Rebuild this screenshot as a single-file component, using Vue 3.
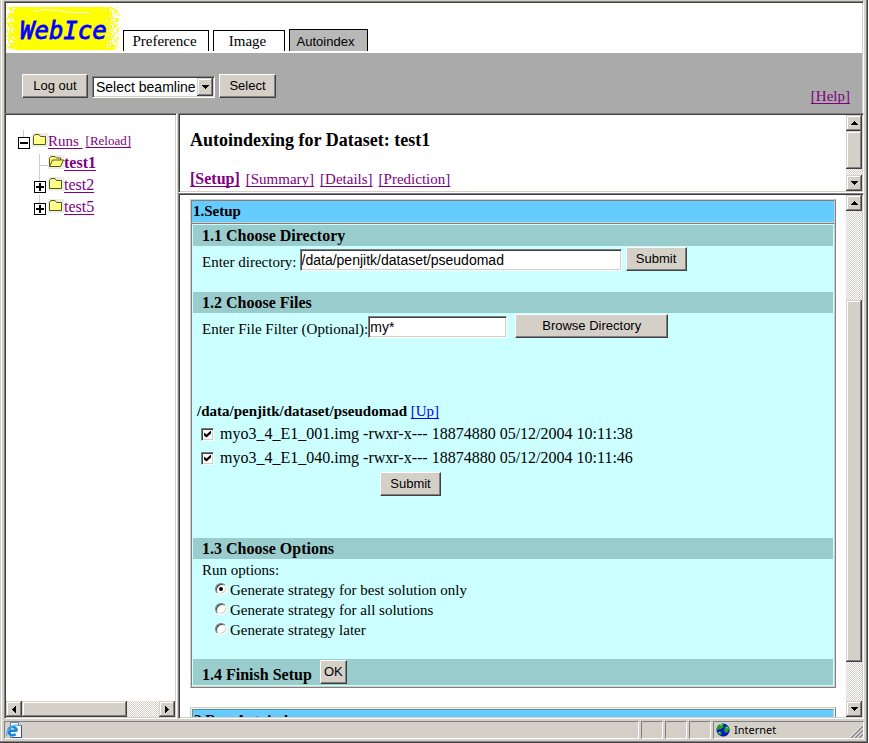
<script setup>
import { ref } from 'vue'

const beamline = ref('Select beamline')
const directory = ref('/data/penjitk/dataset/pseudomad')
const filter = ref('my*')
const strategy = ref('best')

const tabs = ['Preference', 'Image', 'Autoindex']
const activeTab = ref('Autoindex')

const sections = ['Setup', 'Summary', 'Details', 'Prediction']
const activeSection = ref('Setup')

const runs = [
  { name: 'test1', open: true },
  { name: 'test2', open: false },
  { name: 'test5', open: false },
]

const files = ref([
  { name: 'myo3_4_E1_001.img', mode: '-rwxr-x---', size: 18874880, date: '05/12/2004 10:11:38', checked: true },
  { name: 'myo3_4_E1_040.img', mode: '-rwxr-x---', size: 18874880, date: '05/12/2004 10:11:46', checked: true },
])

const strategies = [
  { value: 'best', label: 'Generate strategy for best solution only' },
  { value: 'all', label: 'Generate strategy for all solutions' },
  { value: 'later', label: 'Generate strategy later' },
]

// Scroll positions: space before the thumb, the thumb, space after it.
const treeScroll = [0, 105, 32]
const titleScroll = [0, 38, 6]
const setupScroll = [89, 362, 39]

// Sprayed edge of the logo: pixels thin out towards the border.
function sprayPath(width, height) {
  let seed = 7
  const next = () => (seed = (seed * 16807) % 2147483647) / 2147483647
  let d = ''
  for (let y = 0; y < height; y++) {
    for (let x = 0; x < width; x++) {
      const dx = Math.min(x / 13, (width - 1 - x) / 20)
      const dy = Math.min((y + 5) / 5, (height + 3 - y) / 5)
      const edge = Math.min(dx, dy, Math.hypot(Math.min(dx, 1), Math.min(dy, 1)) - 0.3)
      if (next() < 0.25 + edge * 0.95) d += `M${x} ${y}h1v1h-1z`
    }
  }
  return d
}
const spray = sprayPath(113, 43)
</script>

<template>
  <div class="window">
    <header class="frame banner">
      <div class="masthead">
        <svg class="logo" viewBox="0 0 114 44" role="img" aria-label="WebIce">
          <path :d="spray" fill="#ffff00" shape-rendering="crispEdges" />
          <path d="M27 4.500l12-2 12 1 14 2h20" fill="none" stroke="#fff" />
          <text x="14" y="32" class="logo-text">WebIce</text>
        </svg>
        <nav class="tabs">
          <a v-for="tab in tabs" :key="tab" href="#" class="tab"
             :class="[tab.toLowerCase(), { active: tab === activeTab }]"
             @click.prevent="activeTab = tab">{{ tab }}</a>
        </nav>
      </div>
      <div class="toolbar">
        <div class="tools">
          <button type="button" class="push logout">Log out</button>
          <span class="dropdown">
            <select v-model="beamline" aria-label="Beamline">
              <option>Select beamline</option>
            </select>
            <span class="drop-arrow raised">
              <svg width="7" height="4" viewBox="0 0 7 4" shape-rendering="crispEdges"><path d="M0 0h7v1h-1v1h-1v1h-1v1h-1v-1h-1v-1h-1v-1h-1z" /></svg>
            </span>
          </span>
          <button type="button" class="push choose">Select</button>
        </div>
        <a href="#" class="link">[Help]</a>
      </div>
    </header>

    <div class="body">
      <aside class="frame side">
        <ul class="tree">
          <li class="node root">
            <svg class="toggle" viewBox="0 0 12 12" shape-rendering="crispEdges">
              <path d="M5.500 -7v7" stroke="#c6c6ff" />
              <path d="M.5 .5h11v11h-11z" fill="#fff" stroke="#000" /><path d="M2 6h8" stroke="#000" stroke-width="2" />
            </svg>
            <svg class="folder" viewBox="0 0 16 14">
              <path d="M0 0h16v14h-16z" fill="#ececec" />
              <path d="M1.500 3.500l1.500-2h4l1.500 2h5v8h-12z" fill="#ffff84" stroke="#5a5a00" />
              <path d="M2.500 10.500v-6h10" fill="none" stroke="#ffffd0" />
            </svg>
            <a href="#" class="link">Runs&nbsp;</a>
            <a href="#" class="link reload">[Reload]</a>
          </li>
          <li v-for="run in runs" :key="run.name" class="node child">
            <svg v-if="run.open" class="toggle" viewBox="0 0 12 12" shape-rendering="crispEdges">
              <path d="M5.500 -5v22M5.500 6.500h9" stroke="#c6c6ff" fill="none" />
            </svg>
            <svg v-else class="toggle" viewBox="0 0 12 12" shape-rendering="crispEdges">
              <path d="M5.500 -8v8" stroke="#c6c6ff" />
              <path d="M.5 .5h11v11h-11z" fill="#fff" stroke="#000" /><path d="M2 6h8M6 2v8" stroke="#000" stroke-width="2" />
            </svg>
            <svg class="folder" viewBox="0 0 16 14">
              <path d="M0 0h16v14h-16z" fill="#ececec" />
              <template v-if="run.open">
                <path d="M1.500 11.500v-8l1.500-2h4l1.500 1.500h4v2" fill="#ffff84" stroke="#5a5a00" />
                <path d="M1.500 11.500l3-6.500h11l-3 6.500z" fill="#ffff84" stroke="#5a5a00" />
              </template>
              <template v-else>
                <path d="M1.500 3.500l1.500-2h4l1.500 2h5v8h-12z" fill="#ffff84" stroke="#5a5a00" />
                <path d="M2.500 10.500v-6h10" fill="none" stroke="#ffffd0" />
              </template>
            </svg>
            <a href="#" class="link run" :class="{ current: run.open }">{{ run.name }}</a>
          </li>
        </ul>
        <div class="scroll horizontal">
          <button type="button" class="raised arrow" aria-label="Scroll left">
            <svg width="4" height="7" viewBox="0 0 4 7" shape-rendering="crispEdges"><path d="M4 0v7h-1v-1h-1v-1h-1v-1h-1v-1h1v-1h1v-1h1v-1z" /></svg>
          </button>
          <span :style="{ flexGrow: treeScroll[0] }"></span>
          <span class="raised thumb" :style="{ flexGrow: treeScroll[1] }"></span>
          <span :style="{ flexGrow: treeScroll[2] }"></span>
          <button type="button" class="raised arrow" aria-label="Scroll right">
            <svg width="4" height="7" viewBox="0 0 4 7" shape-rendering="crispEdges"><path d="M0 0h1v1h1v1h1v1h1v1h-1v1h-1v1h-1v1h-1z" /></svg>
          </button>
        </div>
      </aside>

      <div class="work">
        <div class="frame pane-row">
          <div class="pane heading">
            <h1>Autoindexing for Dataset: test1</h1>
            <nav class="sections">
              <a v-for="name in sections" :key="name" href="#" class="link"
                 :class="{ current: name === activeSection }"
                 @click.prevent="activeSection = name">[{{ name }}]</a>
            </nav>
          </div>
          <div class="scroll">
            <button type="button" class="raised arrow" aria-label="Scroll up">
              <svg width="7" height="4" viewBox="0 0 7 4" shape-rendering="crispEdges"><path d="M3 0h1v1h1v1h1v1h1v1h-7v-1h1v-1h1v-1h1z" /></svg>
            </button>
            <span :style="{ flexGrow: titleScroll[0] }"></span>
            <span class="raised thumb" :style="{ flexGrow: titleScroll[1] }"></span>
            <span :style="{ flexGrow: titleScroll[2] }"></span>
            <button type="button" class="raised arrow" aria-label="Scroll down">
              <svg width="7" height="4" viewBox="0 0 7 4" shape-rendering="crispEdges"><path d="M0 0h7v1h-1v1h-1v1h-1v1h-1v-1h-1v-1h-1v-1h-1z" /></svg>
            </button>
          </div>
        </div>

        <div class="frame pane-row grow">
          <main class="pane content">
            <section class="panel">
              <h2 class="panel-title">1.Setup</h2>
              <div class="panel-body">
                <h3 class="bar">1.1 Choose Directory</h3>
                <form class="field-row directory-row" @submit.prevent>
                  <label for="directory">Enter directory:</label>
                  <input id="directory" v-model="directory" type="text" class="text-box" />
                  <button type="submit" class="push submit">Submit</button>
                </form>

                <h3 class="bar">1.2 Choose Files</h3>
                <form class="field-row filter-row" @submit.prevent>
                  <label for="filter">Enter File Filter (Optional):</label>
                  <input id="filter" v-model="filter" type="text" class="text-box" />
                  <button type="button" class="push browse">Browse Directory</button>
                </form>
                <form class="files" @submit.prevent>
                  <p class="path"><b>/data/penjitk/dataset/pseudomad</b> <a href="#" class="up">[Up]</a></p>
                  <label v-for="file in files" :key="file.name" class="file">
                    <input v-model="file.checked" type="checkbox" class="check" />
                    <span>{{ file.name }} {{ file.mode }} {{ file.size }} {{ file.date }}</span>
                  </label>
                  <button type="submit" class="push submit">Submit</button>
                </form>

                <h3 class="bar">1.3 Choose Options</h3>
                <fieldset class="options">
                  <legend>Run options:</legend>
                  <label v-for="item in strategies" :key="item.value" class="option">
                    <input v-model="strategy" type="radio" name="strategy" :value="item.value" class="radio" />
                    <span>{{ item.label }}</span>
                  </label>
                </fieldset>

                <div class="bar finish">
                  <h3>1.4 Finish Setup</h3>
                  <button type="button" class="push ok">OK</button>
                </div>
              </div>
            </section>

            <section class="panel spaced">
              <h2 class="panel-title">2.Run Autoindex</h2>
            </section>
          </main>
          <div class="scroll">
            <button type="button" class="raised arrow" aria-label="Scroll up">
              <svg width="7" height="4" viewBox="0 0 7 4" shape-rendering="crispEdges"><path d="M3 0h1v1h1v1h1v1h1v1h-7v-1h1v-1h1v-1h1z" /></svg>
            </button>
            <span :style="{ flexGrow: setupScroll[0] }"></span>
            <span class="raised thumb" :style="{ flexGrow: setupScroll[1] }"></span>
            <span :style="{ flexGrow: setupScroll[2] }"></span>
            <button type="button" class="raised arrow" aria-label="Scroll down">
              <svg width="7" height="4" viewBox="0 0 7 4" shape-rendering="crispEdges"><path d="M0 0h7v1h-1v1h-1v1h-1v1h-1v-1h-1v-1h-1v-1h-1z" /></svg>
            </button>
          </div>
        </div>
      </div>
    </div>

    <footer class="status">
      <div class="cell wide">
        <svg width="16" height="16" viewBox="0 0 16 16">
          <path d="M4.500 .5h8l3 3v12h-11z" fill="#fff" stroke="#6b7fc0" />
          <path d="M12.500 .5v3h3" fill="#dfe6ff" stroke="#6b7fc0" />
          <path d="M15.500 4v11.500h-10" fill="none" stroke="#3a4c9c" />
          <path d="M2.500 8.800h8.500M10.800 8.800a4.200 4.200 0 1 0-1.200 3.200" fill="none" stroke="#1c86d8" stroke-width="2.600" />
          <path d="M1 14c-1.500-2 1-7 5-9.500s6-2 5.500 0" fill="none" stroke="#58b4f0" stroke-width="1.300" />
        </svg>
      </div>
      <div class="cell"></div>
      <div class="cell"></div>
      <div class="cell"></div>
      <div class="cell zone">
        <svg width="14" height="14" viewBox="0 0 14 14">
          <circle cx="7" cy="7" r="6.500" fill="#0a14c8" />
          <path d="M13.300 5.500a6.500 6.500 0 0 1-8 7.800 7 7 0 0 0 8-7.800z" fill="#000050" />
          <path d="M2 3l3-2 3 0-1 2 1 1-3 2-2 0-1 1-1.500-1z" fill="#18a818" />
          <path d="M9 4l3-1 1.200 3-1.200 3-2.500 1-1.500-2z" fill="#18a818" />
          <path d="M1.500 9l3-.5 1.500 1.500-1.500 2.500-1.500-1z" fill="#18a818" />
          <path d="M4 2l2-.5M10 5l1.500-.5M3 9.500l1 0" stroke="#9cf09c" />
        </svg>
        <span>Internet</span>
        <svg class="grip" width="13" height="13" viewBox="0 0 13 13">
          <path d="M1 13L13 1M5 13l8-8M9 13l4-4" stroke="#808080" stroke-width="1.500" />
          <path d="M0 12.500L12.500 0M4 12.500L13 3.500M8 12.500l5-5" stroke="#fff" stroke-width=".8" />
        </svg>
      </div>
    </footer>
  </div>
</template>

<style>
body {
  margin: 0;
  background: #fff;
}
</style>

<style scoped>
* {
  box-sizing: border-box;
}

.window {
  display: flex;
  flex-direction: column;
  height: 100vh;
  margin-right: 1px;
  padding: 1px 3px 2px 4px;
  border: solid #404040;
  border-width: 0 1px 1px 0;
  background: #d4d0c8;
  box-shadow: inset -1px -1px #808080, inset 1px 0 #d4d0c8, inset 2px 0 #fff;
  color: #000;
  font: 15px/18px "Liberation Serif", serif;
}

h1, h2, h3, p, ul {
  margin: 0;
  padding: 0;
  list-style: none;
}

button, input, select {
  margin: 0;
  padding: 0;
  border: 0;
  border-radius: 0;
  appearance: none;
  color: #000;
  font-family: "Liberation Sans", sans-serif;
}

.link, .up {
  color: #800080;
  text-decoration: underline 1px;
  text-decoration-skip-ink: none;
  text-underline-offset: 2px;
}

.up {
  color: #0000ff;
}

.current {
  font-size: 16px;
  font-weight: bold;
}

.frame {
  padding: 1px;
  border: 1px solid;
  border-color: #808080 #fff #fff #808080;
  background: #fff;
  box-shadow: inset 1px 1px #404040, inset -1px -1px #d4d0c8;
}

.raised {
  background: #d4d0c8;
  box-shadow: inset -1px -1px #404040, inset 1px 1px #d4d0c8, inset -2px -2px #808080, inset 2px 2px #fff;
}

.push {
  height: 24px;
  border: 1px solid;
  border-color: #fff #404040 #404040 #fff;
  background: #d4d0c8;
  box-shadow: inset -1px -1px #808080;
  font-size: 13px;
  line-height: 20px;
}

/* Banner */
.banner {
  flex: none;
  padding-bottom: 0;
  border-bottom: 0;
  box-shadow: inset 1px 1px #404040, inset -1px 0 #d4d0c8;
}

.masthead {
  display: flex;
  align-items: flex-end;
  height: 50px;
  padding-bottom: 2px;
}

.logo {
  width: 114px;
  height: 44px;
}

.logo-text {
  fill: #0000ff;
  stroke: #0000ff;
  stroke-width: 0.8px;
  font: italic 24px "DejaVu Sans Mono", monospace;
}

.tabs {
  display: flex;
  align-items: flex-end;
  gap: 4px;
  margin-left: 3px;
}

.tab {
  height: 21px;
  border: 1px solid #000;
  border-bottom: 0;
  color: #000;
  line-height: 20px;
  text-align: center;
  text-decoration: none;
}

.preference {
  width: 86px;
  padding-right: 3px;
}

.image {
  width: 72px;
  padding-right: 3px;
}

.autoindex {
  width: 79px;
  padding-right: 6px;
}

.active {
  height: 22px;
  background: #b8b8b8;
  font: 13px/23px "Liberation Sans", sans-serif;
}

.toolbar {
  display: flex;
  align-items: flex-end;
  justify-content: space-between;
  height: 60px;
  padding: 0 12px 8px 16px;
  background: #aaa;
}

.tools {
  display: flex;
  align-items: flex-end;
  gap: 4px;
  margin-bottom: 7px;
}

.logout {
  width: 66px;
}

.choose {
  width: 57px;
}

.dropdown {
  position: relative;
  width: 123px;
  height: 22px;
}

.dropdown select {
  width: 100%;
  height: 100%;
  padding-left: 3px;
  border: 1px solid;
  border-color: #808080 #fff #fff #808080;
  background: #fff;
  box-shadow: inset 1px 1px #404040, inset -1px -1px #d4d0c8;
  font-size: 14px;
}

.drop-arrow {
  position: absolute;
  top: 2px;
  right: 2px;
  bottom: 2px;
  display: grid;
  place-items: center;
  width: 16px;
  pointer-events: none;
}

/* Body */
.body {
  display: flex;
  flex: 1;
  gap: 1px;
  min-height: 0;
}

.side {
  display: flex;
  flex: none;
  flex-direction: column;
  width: 173px;
}

.tree {
  flex: 1;
  padding: 15px 0 0 12px;
}

.node {
  display: flex;
  align-items: center;
  height: 22px;
}

.child {
  padding-left: 16px;
}

.toggle {
  width: 12px;
  height: 12px;
  margin-top: 4px;
  overflow: visible;
}

.folder {
  width: 16px;
  height: 14px;
  margin: 0 0 2px 2px;
}

.run {
  font-size: 16px;
}

.reload {
  margin-left: 3px;
  font-size: 13px;
}

.work {
  display: flex;
  flex: 1;
  flex-direction: column;
  min-width: 0;
}

.pane-row {
  display: flex;
}

.grow {
  flex: 1;
  min-height: 0;
}

.pane {
  flex: 1;
  min-width: 0;
  overflow: hidden;
}

.heading {
  padding: 13px 10px 3px;
}

.heading h1 {
  font-size: 18px;
  line-height: 24px;
}

.sections {
  display: flex;
  gap: 6px;
  margin-top: 18px;
}

.content {
  padding: 4px 10px 0;
}

/* Scroll bars */
.scroll {
  display: flex;
  flex: none;
  flex-direction: column;
  width: 16px;
  background: repeating-conic-gradient(#fff 0 25%, #d4d0c8 0 50%) 0 0 / 2px 2px;
}

.horizontal {
  flex-direction: row;
  width: auto;
  height: 16px;
}

.arrow {
  display: grid;
  flex: none;
  place-items: center;
  width: 16px;
  height: 16px;
}

/* Panels */
.panel {
  margin-bottom: 19px;
  border: 1px solid;
  border-color: #d4d0c8 #808080 #808080 #d4d0c8;
  background: #ccffff;
}

.spaced {
  padding: 1px;
}

.panel-title {
  padding-left: 1px;
  border: 1px solid;
  border-color: #808080 #d4d0c8 #d4d0c8 #808080;
  background: #66ccff;
  font-size: 15px;
  line-height: 21px;
}

.panel-body {
  padding: 1px;
  border: 1px solid;
  border-color: #808080 #d4d0c8 #d4d0c8 #808080;
}

.bar {
  padding-left: 9px;
  background: #99cccc;
  font-size: 16px;
  line-height: 21px;
}

.field-row {
  display: flex;
  align-items: flex-end;
  gap: 4px;
  padding: 1px 9px 0;
}

.directory-row {
  gap: 3px;
  margin-bottom: 21px;
}

.filter-row {
  gap: 0;
  margin-bottom: 64px;
}

.text-box {
  width: 322px;
  height: 22px;
  padding: 0 3px 0 1px;
  border: 1px solid;
  border-color: #808080 #fff #fff #808080;
  background: #fff;
  box-shadow: inset 1px 1px #404040, inset -1px -1px #d4d0c8;
  font-size: 14px;
}

.filter-row .text-box {
  width: 139px;
}

.submit {
  width: 61px;
}

.directory-row .submit {
  margin-left: 1px;
}

.browse {
  width: 153px;
  margin-left: 8px;
}

.files {
  width: 427px;
  margin: 0 0 42px 4px;
  white-space: nowrap;
}

.path {
  margin-bottom: 2px;
}

.file {
  display: flex;
  align-items: center;
  gap: 6px;
  height: 24px;
  padding-left: 4px;
  font-size: 16px;
}

.files .submit {
  display: block;
  margin: 2px auto 0;
}

.check {
  display: grid;
  flex: none;
  place-items: center;
  width: 13px;
  height: 13px;
  border: 1px solid;
  border-color: #808080 #fff #fff #808080;
  background: #fff;
  box-shadow: inset 1px 1px #404040, inset -1px -1px #d4d0c8;
}

.check:checked::before {
  width: 7px;
  height: 7px;
  background: #000;
  clip-path: polygon(0 28%, 36% 58%, 100% 0, 100% 43%, 36% 100%, 0 70%);
  content: "";
}

.options {
  margin: 1px 0 19px;
  padding: 0 0 0 9px;
  border: 0;
  line-height: 20px;
}

.options legend {
  padding: 0;
}

.option {
  display: flex;
  align-items: center;
  gap: 3px;
  height: 20px;
  padding-left: 13px;
}

.radio {
  display: grid;
  place-items: center;
  width: 12px;
  height: 12px;
  margin-bottom: 2px;
  border: 1px solid;
  border-color: #808080 #fff #fff #808080;
  border-radius: 50%;
  background: #fff;
  box-shadow: inset 1px 1px #404040, inset -1px -1px #d4d0c8;
}

.radio:checked::before {
  width: 4px;
  height: 4px;
  border-radius: 50%;
  background: #000;
  content: "";
}

.finish {
  display: flex;
  align-items: flex-end;
  gap: 8px;
  height: 26px;
}

.finish h3 {
  font-size: 16px;
  line-height: 20px;
}

.ok {
  width: 27px;
  margin-bottom: 1px;
}

/* Status bar */
.status {
  display: flex;
  flex: none;
  gap: 2px;
  padding: 2px 0 1px;
}

.cell {
  display: flex;
  align-items: center;
  width: 22px;
  height: 18px;
  border: 1px solid;
  border-color: #808080 #fff #fff #808080;
}

.wide {
  flex: 1;
  padding-left: 1px;
}

.zone {
  gap: 4px;
  width: 151px;
  padding-left: 2px;
  font: 11px/16px "Noto Sans", sans-serif;
}

.grip {
  align-self: flex-end;
  margin-left: auto;
}
</style>
